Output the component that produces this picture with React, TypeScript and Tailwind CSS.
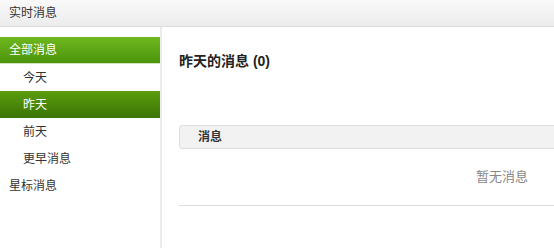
const menu = [
  { label: "全部消息", sub: false, active: "top" },
  { label: "今天", sub: true, active: "" },
  { label: "昨天", sub: true, active: "sel" },
  { label: "前天", sub: true, active: "" },
  { label: "更早消息", sub: true, active: "" },
  { label: "星标消息", sub: false, active: "" },
];

export default function App() {
  return (
    <div
      className="w-[554px] h-[248px] overflow-hidden bg-white text-[#333] flex flex-col"
      style={{ fontFamily: '"Liberation Sans", "Noto Sans CJK SC", sans-serif' }}
    >
      <div className="h-[27px] shrink-0 flex items-center px-[9px] text-[12px] bg-gradient-to-b from-[#f9f9f9] to-[#ececec] border-b border-[#dcdcdc]">
        实时消息
      </div>

      <div className="flex flex-1 min-h-0">
        <div className="w-[162px] shrink-0 border-r-2 border-[#ebebeb] pt-[10px]">
          {menu.map((m) => (
            <div
              key={m.label}
              className={
                "h-[27px] flex items-center text-[12px] " +
                (m.sub ? "pl-[23px] " : "pl-[9px] ") +
                (m.active === "top"
                  ? "text-white bg-gradient-to-b from-[#6fb81e] to-[#4c940c] border-b border-[#cfe3bd]"
                  : m.active === "sel"
                  ? "text-white bg-gradient-to-b from-[#5c9c0e] to-[#3a7505]"
                  : "")
              }
            >
              {m.label}
            </div>
          ))}
        </div>

        <div className="flex-1 min-w-0 pl-[17px]">
          <div className="w-[646px]">
            <h2 className="mt-[25px] h-[18px] flex items-center text-[14px] font-bold text-[#222]">
              昨天的消息 (0)
            </h2>
            <div className="mt-[55px] h-[24px] flex items-center pl-[18px] text-[12px] font-bold text-[#333] bg-[#f2f2f2] border border-[#dddddd] rounded-[3px]">
              消息
            </div>
            <div className="h-[57px] flex items-center justify-center text-[13px] text-[#888] border-b border-[#dedede]">
              暂无消息
            </div>
          </div>
        </div>
      </div>
    </div>
  );
}
